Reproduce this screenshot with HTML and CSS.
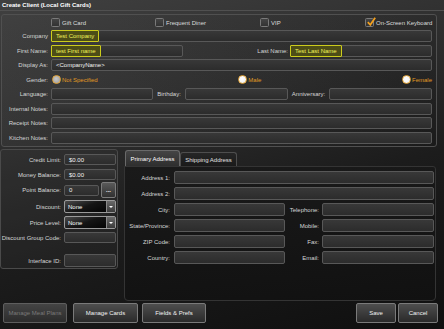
FILE: index.html
```html
<!DOCTYPE html>
<html>
<head>
<meta charset="utf-8">
<link rel="stylesheet" href="styles.css">
</head>
<body>
<div class="screen">
  <div class="titlebar">Create Client (Local Gift Cards)</div>

  <section class="top-panel">
    <div class="checks">
      <div class="check"><span class="box"></span>Gift Card</div>
      <div class="check"><span class="box"></span>Frequent Diner</div>
      <div class="check"><span class="box"></span>VIP</div>
      <div class="check"><span class="box"><svg class="tick" viewBox="0 0 10 10" width="10" height="10"><path d="M1.8 5.2 L4.3 7.8 L9.2 0.8" fill="none" stroke="#f4a11e" stroke-width="1.7"/></svg></span>On-Screen Keyboard</div>
    </div>

    <div class="lbl">Company</div>
    <div class="field"><span class="hl">Test Company</span></div>

    <div class="lbl">First Name:</div>
    <div class="name-row">
      <div class="field"><span class="hl">test First name</span></div>
      <div class="lbl inner">Last Name:</div>
      <div class="field"><span class="hl">Test Last Name</span></div>
    </div>

    <div class="lbl">Display As:</div>
    <div class="field"><span class="txt">&lt;CompanyName&gt;</span></div>

    <div class="lbl">Gender:</div>
    <div class="radios">
      <div class="radio"><span class="dot sel"></span>Not Specified</div>
      <div class="radio"><span class="dot"></span>Male</div>
      <div class="radio"><span class="dot"></span>Female</div>
    </div>

    <div class="lbl">Language:</div>
    <div class="lang-row">
      <div class="field"></div>
      <div class="lbl center">Birthday:</div>
      <div class="field"></div>
      <div class="lbl center">Anniversary:</div>
      <div class="field"></div>
    </div>

    <div class="lbl">Internal Notes:</div>
    <div class="field"></div>
    <div class="lbl">Receipt Notes:</div>
    <div class="field"></div>
    <div class="lbl">Kitchen Notes:</div>
    <div class="field"></div>
  </section>

  <div class="bottom">
    <section class="left-panel">
      <div class="lrow"><div class="lbl">Credit Limit:</div><div class="field sm"><span class="txt">$0.00</span></div></div>
      <div class="lrow"><div class="lbl">Money Balance:</div><div class="field sm"><span class="txt">$0.00</span></div></div>
      <div class="lrow point"><div class="lbl">Point Balance:</div>
        <div class="point-box"><div class="field sm"><span class="txt">0</span></div><div class="dots-btn">...</div></div>
      </div>
      <div class="lrow combo-row"><div class="lbl">Discount:</div><div class="combo"><span class="txt">None</span><span class="drop"></span></div></div>
      <div class="lrow combo-row"><div class="lbl">Price Level:</div><div class="combo"><span class="txt">None</span><span class="drop"></span></div></div>
      <div class="lrow"><div class="lbl">Discount Group Code:</div><div class="field sm"></div></div>
      <div class="lrow iface"><div class="lbl">Interface ID:</div><div class="field sm tall"></div></div>
    </section>

    <section class="tabs">
      <div class="tab-head">
        <div class="tab active">Primary Address</div>
        <div class="tab">Shipping Address</div>
      </div>
      <div class="tab-body">
        <div class="lbl">Address 1:</div><div class="field md"></div>
        <div class="lbl">Address 2:</div><div class="field md"></div>
        <div class="lbl">City:</div>
        <div class="addr-split"><div class="field md"></div><div class="lbl pad">Telephone:</div><div class="field md"></div></div>
        <div class="lbl">State/Province:</div>
        <div class="addr-split"><div class="field md"></div><div class="lbl pad">Mobile:</div><div class="field md"></div></div>
        <div class="lbl">ZIP Code:</div>
        <div class="addr-split"><div class="field md"></div><div class="lbl pad">Fax:</div><div class="field md"></div></div>
        <div class="lbl">Country:</div>
        <div class="addr-split"><div class="field md"></div><div class="lbl pad">Email:</div><div class="field md"></div></div>
      </div>
    </section>
  </div>

  <div class="buttons">
    <div class="btn disabled w64">Manage Meal Plans</div>
    <div class="btn w65 gap6">Manage Cards</div>
    <div class="btn w64 gap4">Fields &amp; Prefs</div>
    <div class="spacer"></div>
    <div class="btn w40">Save</div>
    <div class="btn w40 gap2">Cancel</div>
  </div>
</div>
</body>
</html>
```

FILE: styles.css
```css
* { box-sizing: border-box; margin: 0; padding: 0; }
html, body { width: 444px; height: 329px; overflow: hidden; background: #121212; }
body { font-family: "Liberation Sans", Arial, sans-serif; font-size: 6px; color: #dcdcdc; }

.screen {
  width: 444px; height: 329px;
  display: flex; flex-direction: column;
  background: linear-gradient(165deg, #404040 0%, #303030 30%, #1c1c1c 60%, #0f0f0f 100%);
}

.titlebar {
  height: 11px; line-height: 10px;
  padding-left: 2px;
  font-weight: bold; color: #ffffff;
  border-bottom: 1px solid #505050;
}

/* ---------- top panel ---------- */
.top-panel {
  margin: 3px 0 0 1px; width: 436px;
  border: 1px solid #505050; border-radius: 3px;
  padding: 3px 4px 2.5px 0;
  display: grid;
  grid-template-columns: 46px 381px;
  grid-template-rows: 9.5px;
  column-gap: 3px; row-gap: 2.5px;
  grid-auto-rows: 12px;
  background: linear-gradient(100deg, rgba(70,70,70,0.25), rgba(0,0,0,0.1));
}
.checks {
  grid-column: 1 / -1; height: 9px; align-self: start;
  padding-left: 49px;
  display: grid; grid-template-columns: 104px 105px 105px auto;
}
.check { display: flex; align-items: center; height: 9px; color: #dcdcdc; white-space: nowrap; }
.box {
  position: relative;
  width: 9px; height: 9px; margin-right: 2px; flex: none;
  border: 1px solid #7a7a7a; border-radius: 1.5px;
  background: linear-gradient(#444, #333);
}
.tick { position: absolute; left: -0.5px; top: -2px; }

.lbl { display: flex; align-items: center; justify-content: flex-end; white-space: nowrap; color: #d6d6d6; }
.lbl.center { justify-content: center; }
.lbl.pad { padding-right: 3px; }
.lbl.inner { padding-right: 2px; }

.field {
  height: 12px;
  display: flex; align-items: center;
  border: 1px solid #585858; border-radius: 2px;
  background: linear-gradient(#383838, #2c2c2c);
  color: #f2f2f2;
  white-space: nowrap;
}
.field .txt { padding-left: 4px; }
.hl {
  align-self: stretch;
  margin: -1px 0 -1px -1px;
  display: flex; align-items: center;
  padding: 0 4px;
  border: 1px solid #cccc1c; border-radius: 1px;
  background: #4d4d17;
  color: #f2f25a;
}

.name-row { display: grid; grid-template-columns: 132px 107px 142px; }
.lang-row { display: grid; grid-template-columns: 102px 32px 103px 41px 103px; }

.radios { display: flex; justify-content: space-between; align-items: center; padding-left: 1px; }
.radio { display: flex; align-items: center; color: #e29a24; white-space: nowrap; }
.dot {
  width: 9px; height: 9px; border-radius: 50%; margin-right: 1px; flex: none;
  border: 1px solid #e8a83a;
  background: radial-gradient(circle at 45% 40%, #ffffff 0%, #f4f4f4 60%, #e6d8b0 100%);
}
.dot.sel { background: radial-gradient(circle at 45% 40%, #c8c8c8 0%, #a8a8a8 70%, #999 100%); }

/* ---------- bottom ---------- */
.bottom { display: flex; margin-top: 2px; height: 152px; }

.left-panel {
  align-self: flex-start;
  width: 118px;
  border: 1px solid #4a4a4a; border-radius: 3px;
  padding: 4px 1px 1px 0;
  display: flex; flex-direction: column;
  background: rgba(60,60,60,0.2);
}
.lrow { display: grid; grid-template-columns: 60px 52px; column-gap: 3px; margin-bottom: 4px; }
.field.sm { height: 11px; }
.field.tall { height: 13px; }
.lrow.point { height: 16px; margin-top: -2px; margin-bottom: 2px; align-items: center; }
.point-box { display: flex; align-items: center; }
.point-box .field { width: 35px; }
.dots-btn {
  width: 15px; height: 16px; margin-left: 2px;
  border: 1px solid #7c7c7c; border-radius: 2px;
  background: linear-gradient(#5a5a5a, #303030);
  color: #fff; font-size: 6px; text-align: center; line-height: 14px; font-weight: bold;
}
.lrow.combo-row { margin-bottom: 3px; }
.combo {
  height: 13px; display: flex; align-items: center;
  border: 1px solid #9a9a9a; border-radius: 2px;
  background: linear-gradient(160deg, #4c4c4c 0%, #151515 45%, #000 100%);
  color: #fff;
}
.combo .txt { padding-left: 3px; flex: 1; }
.drop {
  width: 9px; height: 11px;
  border-left: 1px solid #8a8a8a;
  background: linear-gradient(#6a6a6a, #3a3a3a);
  display: flex; align-items: center; justify-content: center;
}
.drop::after {
  content: ""; width: 0; height: 0;
  border-left: 2px solid transparent; border-right: 2px solid transparent;
  border-top: 2px solid #fff;
}
.lrow.iface { margin-top: 7px; margin-bottom: 0; }

.tabs { width: 312px; margin-left: 6px; display: flex; flex-direction: column; }
.tab-head { display: flex; align-items: flex-end; height: 17px; padding-left: 1px; }
.tab {
  height: 14px; width: 57px;
  display: flex; align-items: center; justify-content: center;
  border: 1px solid #4e4e4e; border-bottom: none; border-radius: 3px 3px 0 0;
  background: linear-gradient(#262626, #1a1a1a);
  color: #e0e0e0; white-space: nowrap;
}
.tab.active {
  height: 16px; width: 55px;
  border-color: #6a6a6a;
  background: linear-gradient(#454545, #2e2e2e);
  color: #fff;
}
.tab-body {
  flex: 1;
  border: 1px solid #343434; border-radius: 0 3px 4px 4px;
  background: linear-gradient(175deg, #1a1a1a, #111111);
  padding: 4px 1px 0 0;
  display: grid;
  grid-template-columns: 45px 260px;
  column-gap: 4px; row-gap: 3px;
  grid-auto-rows: 13px; align-content: start;
}
.field.md { height: 13px; }
.addr-split { display: grid; grid-template-columns: 111px 37px 112px; }

/* ---------- buttons ---------- */
.buttons { display: flex; margin-top: 2px; height: 20px; padding-left: 3px; padding-right: 6px; }
.spacer { flex: 1; }
.btn {
  height: 20px;
  display: flex; align-items: center; justify-content: center;
  border: 1px solid #7a7a7a; border-radius: 2px;
  background: linear-gradient(#4e4e4e, #2a2a2a);
  color: #f2f2f2; white-space: nowrap;
}
.btn.disabled { color: #7a7a7a; border-color: #5e5e5e; background: linear-gradient(#444, #2c2c2c); }
.w64 { width: 64px; }
.w65 { width: 65px; }
.w40 { width: 40px; }
.gap6 { margin-left: 6px; }
.gap4 { margin-left: 4px; }
.gap2 { margin-left: 2px; }
```
